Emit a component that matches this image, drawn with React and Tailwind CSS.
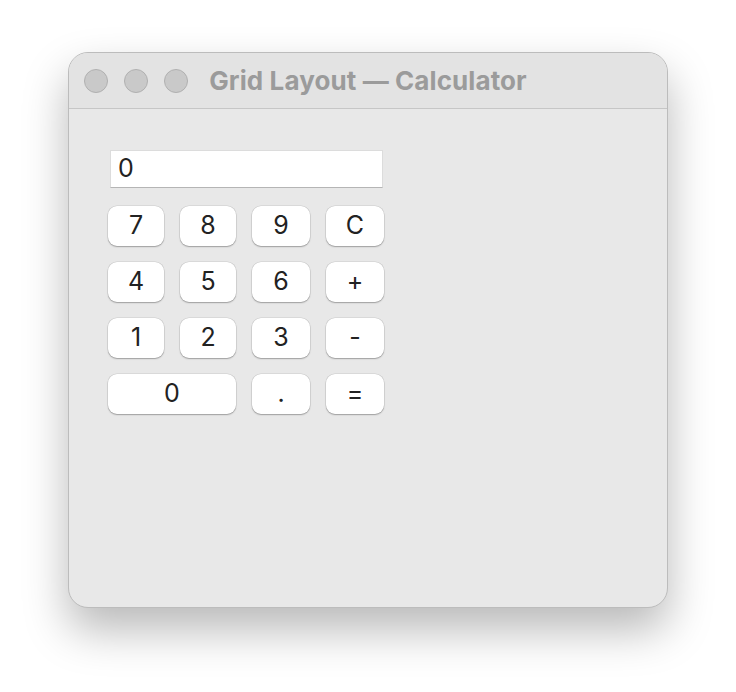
export default function App() {
  const btn =
    "h-[40px] bg-white rounded-[9px] flex items-center justify-center text-[25px] text-[#222] shadow-[0_0_0_0.5px_rgba(0,0,0,0.12),0_1px_1.5px_rgba(0,0,0,0.28)]";
  const rows = [
    ["7", "8", "9", "C"],
    ["4", "5", "6", "+"],
    ["1", "2", "3", "-"],
  ];
  return (
    <div className="w-[736px] h-[692px] bg-white flex justify-center pt-[52px]" style={{ fontFamily: "Inter, 'Noto Sans', sans-serif" }}>
      <div className="w-[600px] h-[556px] rounded-[20px] bg-[#e8e8e8] border border-[#bcbcbc] shadow-[0_22px_45px_rgba(0,0,0,0.28)] overflow-hidden flex flex-col">
        <div className="h-[56px] bg-[#e3e3e3] border-b border-[#c6c6c6] relative flex items-center">
          <div className="flex gap-[16px] pl-[15px]">
            <div className="w-[24px] h-[24px] rounded-full bg-[#c9c9c9] border border-[#b0b0b0]" />
            <div className="w-[24px] h-[24px] rounded-full bg-[#c9c9c9] border border-[#b0b0b0]" />
            <div className="w-[24px] h-[24px] rounded-full bg-[#c9c9c9] border border-[#b0b0b0]" />
          </div>
          <div className="absolute inset-0 flex items-center justify-center text-[26px] font-bold text-[#9b9b9b] tracking-[0.1px]">
            Grid Layout — Calculator
          </div>
        </div>
        <div className="pl-[39px] pt-[41px] flex flex-col">
          <div className="ml-[2px] w-[273px] h-[38px] bg-white border border-[#dcdcdc] border-b-[#b5b5b5] flex items-center pl-[7px] text-[25px] text-[#222]">
            0
          </div>
          <div className="mt-[18px] grid grid-cols-[56px_56px_58px_58px] gap-[16px] w-[276px]">
            {rows.map((r) => r.map((k) => (
              <div key={k} className={btn}>{k}</div>
            )))}
            <div className={btn + " col-span-2"}>0</div>
            <div className={btn}>.</div>
            <div className={btn}>=</div>
          </div>
        </div>
      </div>
    </div>
  );
}
